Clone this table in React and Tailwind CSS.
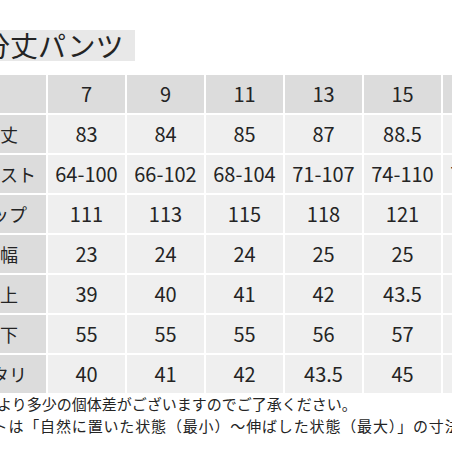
import React from "react";

const cols = ["7", "9", "11", "13", "15", "17"];
const rows = [
  ["着丈", "83", "84", "85", "87", "88.5", "90"],
  ["ウエスト", "64-100", "66-102", "68-104", "71-107", "74-110", "77-113"],
  ["ヒップ", "111", "113", "115", "118", "121", "124"],
  ["裾幅", "23", "24", "24", "25", "25", "26"],
  ["股上", "39", "40", "41", "42", "43.5", "45"],
  ["股下", "55", "55", "55", "56", "57", "58"],
  ["ワタリ", "40", "41", "42", "43.5", "45", "46.5"],
];

export default function App() {
  return (
    <div
      className="w-[452px] h-[452px] overflow-hidden bg-white text-[#242424] pt-[30px] flex flex-col"
      style={{ fontFamily: '"Noto Sans CJK JP", "Noto Sans", sans-serif' }}
    >
      <div className="w-[135px] h-[31px] bg-[#e8e8e8] overflow-hidden flex items-center">
        <span className="ml-[-18px] text-[28px] leading-[31px] whitespace-nowrap">分丈パンツ</span>
      </div>
      <div className="mt-[14px] ml-[-46px] w-max grid grid-cols-[92px_repeat(6,77px)] gap-[2px] bg-white">
        <div className="h-[38px] bg-[#dcdcdc]" />
        {cols.map((c) => (
          <div key={c} className="h-[38px] bg-[#dcdcdc] flex items-center justify-center text-[20px]">
            {c}
          </div>
        ))}
        {rows.map((r) => (
          <React.Fragment key={r[0]}>
            <div className="h-[38px] bg-[#dcdcdc] flex items-center justify-center text-[18px] whitespace-nowrap">
              {r[0]}
            </div>
            {r.slice(1).map((v, i) => (
              <div key={i} className="h-[38px] bg-[#efefef] flex items-center justify-center text-[20px] whitespace-nowrap">
                {v}
              </div>
            ))}
          </React.Fragment>
        ))}
      </div>
      <div className="text-[15px] leading-[22px] whitespace-nowrap ml-[-63px]">
        ※商品により多少の個体差がございますのでご了承ください。
      </div>
      <div className="text-[15px] leading-[22px] whitespace-nowrap ml-[-55px] tracking-[0.85px]">
        ウエストは「自然に置いた状態（最小）～伸ばした状態（最大）」の寸法です。
      </div>
    </div>
  );
}
